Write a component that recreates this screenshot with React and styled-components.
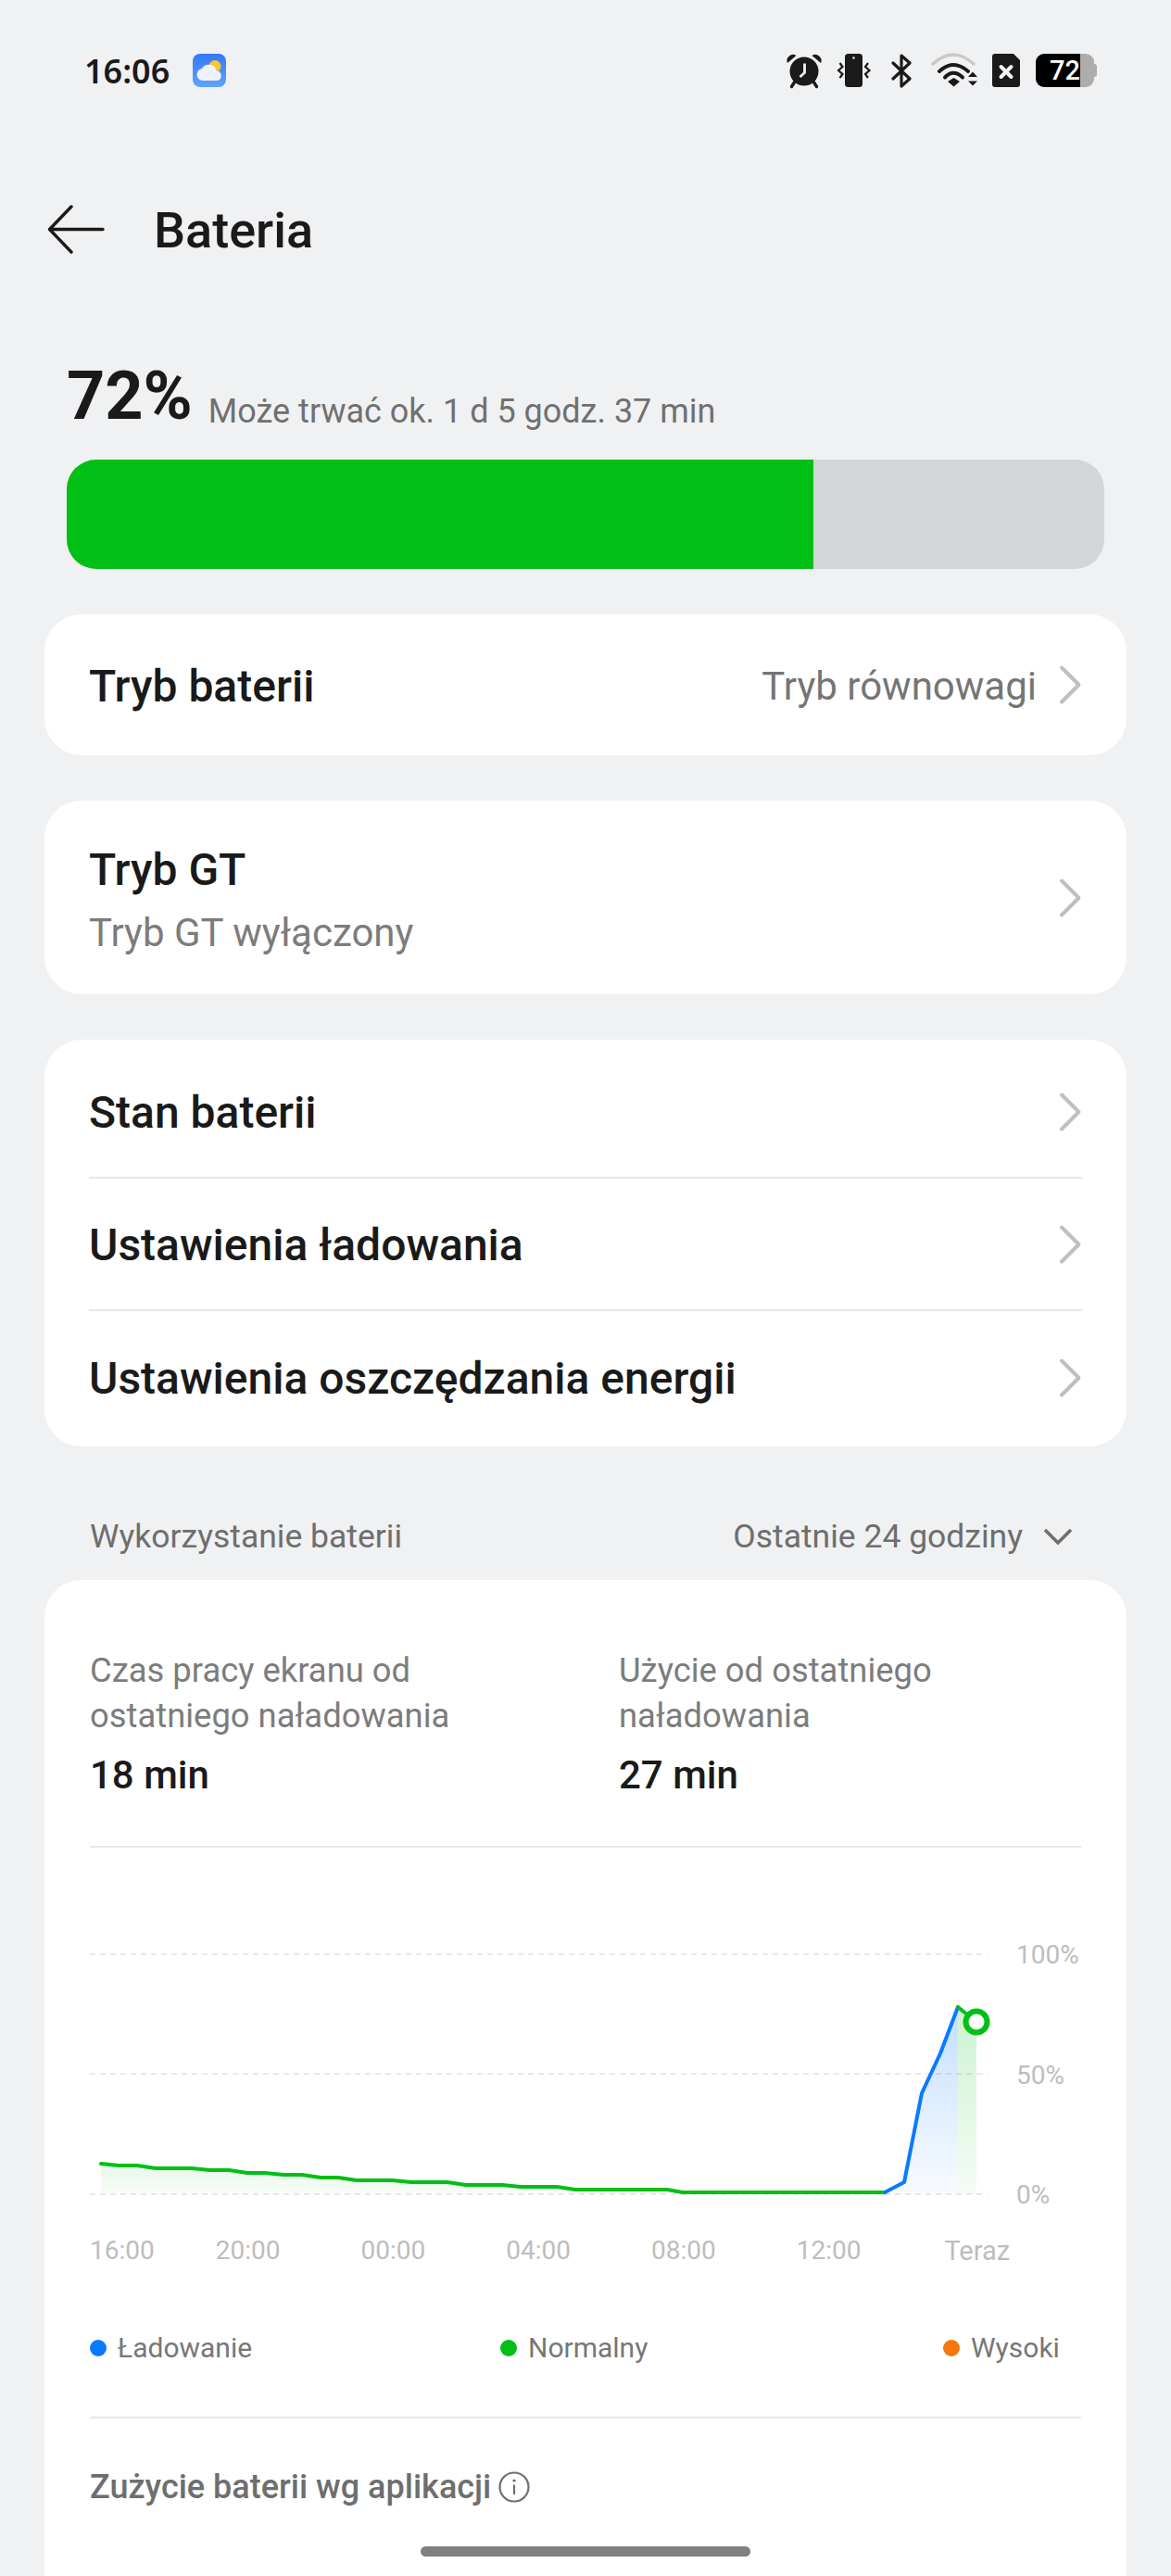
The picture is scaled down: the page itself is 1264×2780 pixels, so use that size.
import styled, { createGlobalStyle } from "styled-components"

const GlobalStyle = createGlobalStyle`
    html, body {
        margin: 0;
        padding: 0;
        background: #f0f1f3;
    }
    * {
        box-sizing: border-box;
    }
`

const greenLine = [
    [12, 241], [31, 243], [51, 243], [71, 246], [110, 246], [130, 248], [150, 248], [170, 251],
    [189, 251], [209, 253], [229, 253], [249, 256], [268, 256], [288, 259], [327, 259], [347, 261],
    [386, 261], [406, 264], [445, 264], [465, 266], [504, 266], [524, 269], [623, 269], [640, 272], [858, 272],
]
const blueLine = [[858, 272], [879, 261], [898, 165], [918, 122], [937, 72]]
const lastGreen = [[937, 72], [957, 88]]
const toPoints = (list) => list.map((p) => p.join(",")).join(" ")

export default function App() {
    return (
        <>
            <GlobalStyle />
            <Page>
                <StatusBar>
                    <StatusLeft>
                        <Clock>16:06</Clock>
                        <WeatherIcon />
                    </StatusLeft>
                    <StatusIcons>
                        <AlarmIcon />
                        <VibrateIcon />
                        <BluetoothIcon />
                        <WifiIcon />
                        <SimIcon />
                        <Battery>
                            <BatteryFill>72</BatteryFill>
                            <BatteryRest />
                            <BatteryNub />
                        </Battery>
                    </StatusIcons>
                </StatusBar>

                <Header>
                    <BackArrow />
                    <Title>Bateria</Title>
                </Header>

                <Summary>
                    <Percent>72%</Percent>
                    <Remaining>Może trwać ok. 1 d 5 godz. 37 min</Remaining>
                </Summary>
                <LevelBar>
                    <LevelFill />
                </LevelBar>

                <Card $height={152}>
                    <Row $height={152}>
                        <RowTitle>Tryb baterii</RowTitle>
                        <RowRight>
                            <RowValue>Tryb równowagi</RowValue>
                            <Chevron />
                        </RowRight>
                    </Row>
                </Card>

                <Card $height={209}>
                    <Row $height={209}>
                        <RowText>
                            <RowTitle>Tryb GT</RowTitle>
                            <RowSub>Tryb GT wyłączony</RowSub>
                        </RowText>
                        <Chevron />
                    </Row>
                </Card>

                <ListCard>
                    <ListRow>
                        <RowTitle>Stan baterii</RowTitle>
                        <Chevron />
                    </ListRow>
                    <ListRow>
                        <RowTitle>Ustawienia ładowania</RowTitle>
                        <Chevron />
                    </ListRow>
                    <ListRow>
                        <RowTitle>Ustawienia oszczędzania energii</RowTitle>
                        <Chevron />
                    </ListRow>
                </ListCard>

                <SectionHeader>
                    <SectionTitle>Wykorzystanie baterii</SectionTitle>
                    <RangePicker>
                        Ostatnie 24 godziny
                        <ChevronDown />
                    </RangePicker>
                </SectionHeader>

                <UsageCard>
                    <Stats>
                        <div>
                            <StatLabel>Czas pracy ekranu od<br />ostatniego naładowania</StatLabel>
                            <StatValue>18 min</StatValue>
                        </div>
                        <div>
                            <StatLabel>Użycie od ostatniego<br />naładowania</StatLabel>
                            <StatValue>27 min</StatValue>
                        </div>
                    </Stats>
                    <Divider />
                    <ChartRow>
                        <ChartSvg width="982" height="291" viewBox="0 0 982 291">
                            <defs>
                                <linearGradient id="blueFade" x1="0" y1="0" x2="0" y2="1">
                                    <stop offset="0" stopColor="#0a7aff" stopOpacity="0.24" />
                                    <stop offset="1" stopColor="#0a7aff" stopOpacity="0.03" />
                                </linearGradient>
                                <linearGradient id="greenFade" x1="0" y1="0" x2="0" y2="1">
                                    <stop offset="0" stopColor="#02bf15" stopOpacity="0.2" />
                                    <stop offset="1" stopColor="#02bf15" stopOpacity="0.04" />
                                </linearGradient>
                                <linearGradient id="greenLow" x1="0" y1="0" x2="0" y2="1">
                                    <stop offset="0" stopColor="#02bf15" stopOpacity="0.1" />
                                    <stop offset="1" stopColor="#02bf15" stopOpacity="0.03" />
                                </linearGradient>
                            </defs>
                            {[15, 144, 274].map((y) => (
                                <line key={y} x1="0" y1={y} x2="969" y2={y} stroke="#e2e2e2" strokeWidth="1.6" strokeDasharray="6 5" />
                            ))}
                            <polygon points={`${toPoints(greenLine)} 858,274 12,274`} fill="url(#greenLow)" />
                            <polygon points={`858,274 ${toPoints(blueLine)} 937,274`} fill="url(#blueFade)" />
                            <polygon points="937,72 957,88 957,274 937,274" fill="url(#greenFade)" />
                            <polyline points={toPoints(greenLine)} fill="none" stroke="#02bf15" strokeWidth="4" strokeLinejoin="round" strokeLinecap="round" />
                            <polyline points={toPoints(blueLine)} fill="none" stroke="#0a7aff" strokeWidth="4" strokeLinejoin="round" strokeLinecap="round" />
                            <polyline points={toPoints(lastGreen)} fill="none" stroke="#02bf15" strokeWidth="4" strokeLinecap="round" />
                            <circle cx="957" cy="88" r="11.5" fill="#fff" stroke="#02bf15" strokeWidth="6" />
                        </ChartSvg>
                        <YAxis>
                            <AxisLabel>100%</AxisLabel>
                            <AxisLabel>50%</AxisLabel>
                            <AxisLabel>0%</AxisLabel>
                        </YAxis>
                    </ChartRow>
                    <XAxis>
                        <AxisLabel>16:00</AxisLabel>
                        <AxisLabel>20:00</AxisLabel>
                        <AxisLabel>00:00</AxisLabel>
                        <AxisLabel>04:00</AxisLabel>
                        <AxisLabel>08:00</AxisLabel>
                        <AxisLabel>12:00</AxisLabel>
                        <AxisLabel>Teraz</AxisLabel>
                    </XAxis>
                    <Legend>
                        <LegendItem><Dot $color="#0a7aff" />Ładowanie</LegendItem>
                        <LegendItem><Dot $color="#02bf15" />Normalny</LegendItem>
                        <LegendItem><Dot $color="#f5780f" />Wysoki</LegendItem>
                    </Legend>
                    <LegendDivider />
                    <AppsTitle>
                        Zużycie baterii wg aplikacji
                        <InfoIcon />
                    </AppsTitle>
                </UsageCard>

                <NavPill />
            </Page>
        </>
    )
}

function WeatherIcon() {
    return (
        <WeatherSvg width="36" height="36" viewBox="0 0 36 36">
            <defs>
                <linearGradient id="sky" x1="0" y1="0" x2="0" y2="1">
                    <stop offset="0" stopColor="#3478f9" />
                    <stop offset="1" stopColor="#5ea4fb" />
                </linearGradient>
            </defs>
            <rect width="36" height="36" rx="8" fill="url(#sky)" />
            <circle cx="24" cy="13.5" r="6.5" fill="#fbc72e" />
            <path d="M11 29 a6.6 6.6 0 0 1 -1 -13.1 a8.5 8.5 0 0 1 15.6 2.4 a5.4 5.4 0 0 1 0.6 10.7 z" fill="#edf2fa" />
        </WeatherSvg>
    )
}

function AlarmIcon() {
    return (
        <svg width="38" height="39" viewBox="0 0 38 39">
            <path d="M1 11 a6.5 6.5 0 0 1 9.5 -8 z M37 11 a6.5 6.5 0 0 0 -9.5 -8 z" fill="#1a1a1a" />
            <path d="M9 31 l-3.5 5.5 M29 31 l3.5 5.5" stroke="#1a1a1a" strokeWidth="3.4" strokeLinecap="round" />
            <circle cx="19" cy="20" r="15.5" fill="#1a1a1a" />
            <path d="M19.5 11.5 v10 l-5 4.5" fill="none" stroke="#f0f1f3" strokeWidth="2.8" />
        </svg>
    )
}

function VibrateIcon() {
    return (
        <svg width="38" height="36" viewBox="0 0 38 36">
            <rect x="9" y="0" width="19" height="36" rx="3.5" fill="#1a1a1a" />
            <circle cx="18.5" cy="4.5" r="1.2" fill="#f0f1f3" />
            <path d="M3.5 10 l3 4 l-4.5 4 l4.5 4 l-3 4 M34 10 l-3 4 l4.5 4 l-4.5 4 l3 4" fill="none" stroke="#1a1a1a" strokeWidth="2.2" />
        </svg>
    )
}

function BluetoothIcon() {
    return (
        <svg width="31" height="37" viewBox="-5 0 31 37">
            <path d="M2 10 l18 17 l-9 8 V2 l9 8 L2 27" fill="none" stroke="#1a1a1a" strokeWidth="3.2" strokeLinejoin="round" strokeLinecap="round" />
        </svg>
    )
}

function WifiIcon() {
    return (
        <svg width="51" height="38" viewBox="0 0 51 38">
            <path d="M3 12 Q25 -8 47 12" fill="none" stroke="#c9c9c9" strokeWidth="3.4" strokeLinecap="round" />
            <path d="M10 20 Q25 6 41 20" fill="none" stroke="#1a1a1a" strokeWidth="4" strokeLinecap="round" />
            <path d="M16 26.5 Q25 17 35 26.5" fill="none" stroke="#1a1a1a" strokeWidth="4" strokeLinecap="round" />
            <path d="M19 31 l6.5 -4 l6.5 4 l-6.5 5.5 z" fill="#1a1a1a" />
            <path d="M41 26 l5 -5.5 l5 5.5 z M41 30.5 h10 l-5 5 z" fill="#1a1a1a" />
        </svg>
    )
}

function SimIcon() {
    return (
        <svg width="30" height="36" viewBox="0 0 30 36">
            <path d="M3 0 h20 l7 7 v26 a3 3 0 0 1 -3 3 h-24 a3 3 0 0 1 -3 -3 v-30 a3 3 0 0 1 3 -3 z" fill="#1a1a1a" />
            <path d="M9.5 14 l11 11 M20.5 14 l-11 11" stroke="#f4f4f4" strokeWidth="4" strokeLinecap="round" />
        </svg>
    )
}

function BackArrow() {
    return (
        <svg width="62" height="56" viewBox="0 0 62 56">
            <path d="M60 27.5 H3 M26 3 L2.5 27.5 L26 52" fill="none" stroke="#1a1a1a" strokeWidth="3.4" strokeLinecap="round" strokeLinejoin="round" />
        </svg>
    )
}

function Chevron() {
    return (
        <svg width="26" height="44" viewBox="0 0 26 44">
            <path d="M4 3.5 L22.5 22 L4 40.5" fill="none" stroke="#bfbfbf" strokeWidth="4" strokeLinecap="round" strokeLinejoin="round" />
        </svg>
    )
}

function ChevronDown() {
    return (
        <ChevronDownSvg width="32" height="20" viewBox="0 0 32 20">
            <path d="M2 3 L16 17 L30 3" fill="none" stroke="#6e6e6e" strokeWidth="3.6" />
        </ChevronDownSvg>
    )
}

function InfoIcon() {
    return (
        <InfoSvg width="34" height="34" viewBox="0 0 34 34">
            <circle cx="17" cy="17" r="15.5" fill="none" stroke="#6e6e6e" strokeWidth="2.2" />
            <path d="M17 14.5 V25" stroke="#6e6e6e" strokeWidth="2.2" />
            <circle cx="17" cy="10" r="1.6" fill="#6e6e6e" />
        </InfoSvg>
    )
}

const Page = styled.div`
    position: relative;
    width: 1264px;
    height: 2780px;
    overflow: hidden;
    background: #f0f1f3;
    font-family: Roboto, "Noto Sans", sans-serif;
    color: #1a1a1a;
`

const StatusBar = styled.div`
    display: flex;
    align-items: center;
    justify-content: space-between;
    height: 152px;
    padding: 0 80px 0 91px;
`

const StatusLeft = styled.div`
    display: flex;
    align-items: center;
`

const WeatherSvg = styled.svg`
    margin-left: 25px;
`

const Clock = styled.span`
    font-family: "Noto Sans", sans-serif;
    font-size: 36px;
    font-weight: 600;
`

const StatusIcons = styled.div`
    display: flex;
    align-items: center;
    gap: 16px;
`

const Battery = styled.div`
    display: flex;
    align-items: center;
    height: 36px;
    margin-left: 1px;
`

const BatteryFill = styled.div`
    display: flex;
    align-items: center;
    justify-content: flex-end;
    width: 48px;
    height: 36px;
    background: #000;
    color: #fff;
    border-radius: 9px 0 0 9px;
    font-size: 29px;
    font-weight: 500;
`

const BatteryRest = styled.div`
    width: 15px;
    height: 36px;
    background: #adadad;
    border-radius: 0 9px 9px 0;
`

const BatteryNub = styled.div`
    width: 3px;
    height: 14px;
    background: #adadad;
    border-radius: 0 3px 3px 0;
`

const Header = styled.div`
    display: flex;
    align-items: center;
    height: 80px;
    margin-top: 56px;
    padding-left: 51px;
`

const Title = styled.h1`
    margin: 0 0 0 53px;
    font-size: 54px;
    font-weight: 500;
`

const Summary = styled.div`
    display: flex;
    align-items: flex-end;
    height: 84px;
    margin-top: 98px;
    padding-left: 72px;
`

const Percent = styled.span`
    font-size: 72px;
    line-height: 84px;
    font-weight: 700;
`

const Remaining = styled.span`
    margin-left: 17px;
    font-size: 36px;
    line-height: 52px;
    color: #707070;
`

const LevelBar = styled.div`
    height: 118px;
    margin: 26px 72px 0;
    background: #d4d5d7;
    border-radius: 32px;
    overflow: hidden;
`

const LevelFill = styled.div`
    width: 806px;
    height: 100%;
    background: #02bf15;
`

const Card = styled.div`
    height: ${(p) => p.$height}px;
    margin: 49px 48px 0;
    background: #fff;
    border-radius: 40px;
`

const Row = styled.div`
    display: flex;
    align-items: center;
    justify-content: space-between;
    height: ${(p) => p.$height}px;
    padding: 0 48px;
`

const RowText = styled.div`
    padding-top: 6px;
`

const RowTitle = styled.div`
    padding-top: 3px;
    font-size: 48px;
    line-height: 60px;
    font-weight: 500;
`

const RowSub = styled.div`
    margin-top: 8px;
    font-size: 42px;
    line-height: 60px;
    color: #7c7c7c;
`

const RowRight = styled.div`
    display: flex;
    align-items: center;
`

const RowValue = styled.span`
    margin-right: 23px;
    padding-top: 3px;
    font-size: 42px;
    color: #757575;
`

const ListCard = styled.div`
    margin: 49px 48px 0;
    padding: 7px 48px 3px;
    background: #fff;
    border-radius: 40px;
`

const ListRow = styled.div`
    display: flex;
    align-items: center;
    justify-content: space-between;
    height: 143px;
    border-bottom: 2px solid #e6e6e6;

    &:last-child {
        border-bottom: none;
    }
`

const SectionHeader = styled.div`
    display: flex;
    align-items: center;
    justify-content: space-between;
    height: 38px;
    margin: 78px 106px 28px 97px;
`

const SectionTitle = styled.span`
    font-size: 35.5px;
    color: #6e6e6e;
`

const RangePicker = styled.span`
    display: flex;
    align-items: center;
    font-size: 35.5px;
    color: #6e6e6e;
`

const ChevronDownSvg = styled.svg`
    margin-left: 22px;
`

const UsageCard = styled.div`
    height: 1200px;
    margin: 0 48px;
    padding: 73px 49px 0;
    background: #fff;
    border-radius: 40px;
`

const Stats = styled.div`
    display: grid;
    grid-template-columns: 571px 1fr;
`

const StatLabel = styled.div`
    font-size: 36.4px;
    line-height: 49px;
    color: #7c7c7c;
`

const StatValue = styled.div`
    margin-top: 15px;
    font-size: 42px;
    line-height: 50px;
    font-weight: 500;
`

const Divider = styled.div`
    height: 2px;
    margin-top: 51px;
    background: #e8e8e8;
`

const ChartRow = styled.div`
    display: flex;
    margin-top: 100px;
`

const ChartSvg = styled.svg`
    display: block;
    flex: none;
`

const YAxis = styled.div`
    display: flex;
    flex-direction: column;
    justify-content: space-between;
    height: 291px;
    margin-left: 18px;
`

const AxisLabel = styled.span`
    font-size: 28px;
    line-height: 32px;
    color: #bdbdbd;
`

const XAxis = styled.div`
    display: flex;
    gap: 87px;
    margin-top: 28px;

    & > :first-child {
        margin-right: -21px;
    }

    & > :last-child {
        margin-left: 3px;
        font-size: 29px;
    }
`

const Legend = styled.div`
    display: grid;
    grid-template-columns: 443px 478px auto;
    margin-top: 71px;
`

const LegendItem = styled.div`
    display: flex;
    align-items: center;
    font-size: 30px;
    line-height: 36px;
    color: #777;
`

const Dot = styled.span`
    width: 18px;
    height: 18px;
    margin-right: 12px;
    border-radius: 50%;
    background: ${(p) => p.$color};
`

const LegendDivider = styled.div`
    height: 2px;
    margin-top: 56px;
    background: #e8e8e8;
`

const AppsTitle = styled.div`
    display: flex;
    align-items: center;
    height: 40px;
    margin-top: 54px;
    font-size: 36px;
    font-weight: 500;
    color: #6e6e6e;
`

const InfoSvg = styled.svg`
    margin-left: 8px;
`

const NavPill = styled.div`
    position: absolute;
    left: 454px;
    bottom: 21px;
    width: 356px;
    height: 11px;
    border-radius: 6px;
    background: #808080;
`
